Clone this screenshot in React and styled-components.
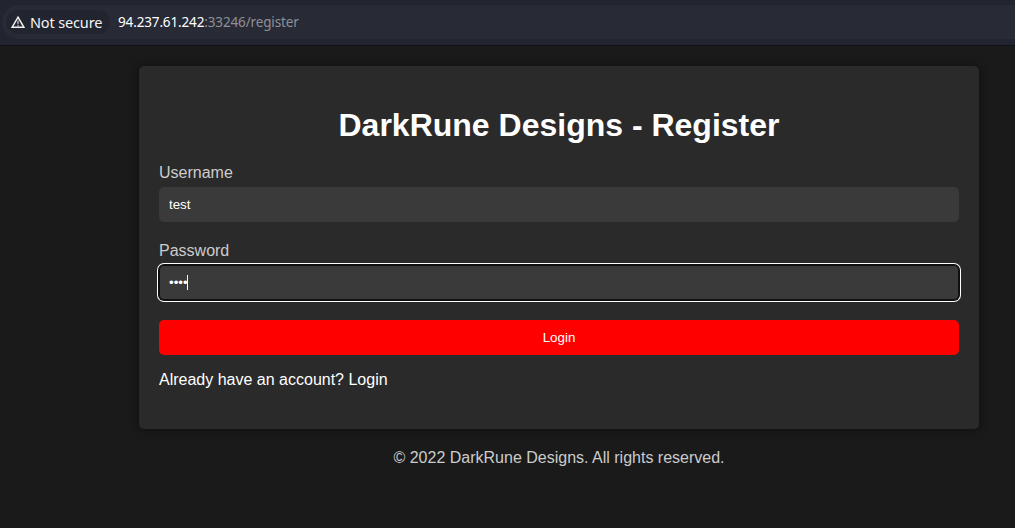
import React from "react";
import styled, { createGlobalStyle } from "styled-components";

const GlobalStyle = createGlobalStyle`
  *, *::before, *::after { box-sizing: border-box; }
  body {
    margin: 0;
    background: #1a1a1a;
    color: #ccc;
    font: 16px/18px "Liberation Sans", Arial, sans-serif;
    overflow: hidden;
  }
`;

const AddressBar = styled.header`
  height: 46px;
  padding: 5px 0 6px 2px;
  background: #22252f;
  border-bottom: 1px solid #101114;
`;

const Omnibox = styled.div`
  display: flex;
  align-items: center;
  height: 34px;
  padding-left: 4px;
  background: #282a36;
  border-radius: 17px 0 0 17px;
  font-family: "Noto Sans", sans-serif;
  white-space: nowrap;
`;

const SecurityChip = styled.div`
  display: flex;
  align-items: center;
  gap: 4px;
  width: 104px;
  height: 24px;
  padding-left: 5px;
  border-radius: 12px;
  background: #22252f;
  color: #f4f4f4;
  font-size: 14.5px;
  letter-spacing: -0.15px;
`;

const Url = styled.span`
  margin-left: 8px;
  font-size: 13.5px;
  letter-spacing: -0.14px;
  color: #8e9098;
`;

const Host = styled.span`
  color: #fff;
`;

const Page = styled.main`
  width: 840px;
  margin: 20px 0 0 139px;
`;

const Card = styled.section`
  height: 363px;
  padding: 41px 20px 20px;
  border-radius: 5px;
  background: #2a2a2a;
  box-shadow: 0 0 10px rgba(0, 0, 0, 0.5);
`;

const Title = styled.h1`
  margin: 0 0 20px;
  font-size: 32px;
  line-height: 36px;
  text-align: center;
  color: #fff;
`;

const Field = styled.div`
  position: relative;
  margin-bottom: 19px;

  & + & {
    margin-bottom: 20px;
  }
`;

const Label = styled.label`
  display: block;
  height: 24px;
  padding-top: 1px;
  color: #ccc;
`;

const Input = styled.input`
  display: block;
  width: 100%;
  height: 35px;
  padding: 10px;
  border: 0;
  border-radius: 5px;
  outline: 0;
  background: #3a3a3a;
  color: #fff;
  font: 13.3333px "Liberation Sans", Arial, sans-serif;
  box-shadow: ${({ $focused }) =>
    $focused ? "inset 0 0 0 1px #101010, 0 0 0 1px #101010, 0 0 0 2px #fff" : "none"};
`;

const Caret = styled.span`
  position: absolute;
  left: 28px;
  bottom: 10px;
  width: 1px;
  height: 15px;
  background: #fff;
`;

const SubmitButton = styled.button`
  display: block;
  width: 100%;
  height: 35px;
  padding: 0;
  border: 0;
  border-radius: 5px;
  background: #f00;
  color: #fff;
  font: 13.3333px "Liberation Sans", Arial, sans-serif;
`;

const AccountLink = styled.a`
  display: block;
  margin-top: 16px;
  color: #fff;
`;

const Footer = styled.footer`
  margin-top: 20px;
  text-align: center;
`;

const WarningIcon = () => (
  <svg width="15" height="14" viewBox="0 0 15 14" fill="none" stroke="#f0f0f0" aria-hidden="true">
    <path d="M7 2.1 L12.9 12.3 H1.1 Z" strokeWidth="1.45" />
    <path d="M7 5.6 V9 M7 9.8 V11.2" strokeWidth="1.3" strokeOpacity="0.75" />
  </svg>
);

export default function App() {
  return (
    <>
      <GlobalStyle />
      <AddressBar>
        <Omnibox>
          <SecurityChip>
            <WarningIcon />
            Not secure
          </SecurityChip>
          <Url>
            <Host>94.237.61.242</Host>:33246/register
          </Url>
        </Omnibox>
      </AddressBar>
      <Page>
        <Card>
          <Title>DarkRune Designs - Register</Title>
          <Field>
            <Label htmlFor="username">Username</Label>
            <Input id="username" type="text" defaultValue="test" />
          </Field>
          <Field>
            <Label htmlFor="password">Password</Label>
            <Input id="password" type="password" defaultValue="test" $focused />
            <Caret />
          </Field>
          <SubmitButton type="button">Login</SubmitButton>
          <AccountLink>Already have an account? Login</AccountLink>
        </Card>
        <Footer>© 2022 DarkRune Designs. All rights reserved.</Footer>
      </Page>
    </>
  );
}
